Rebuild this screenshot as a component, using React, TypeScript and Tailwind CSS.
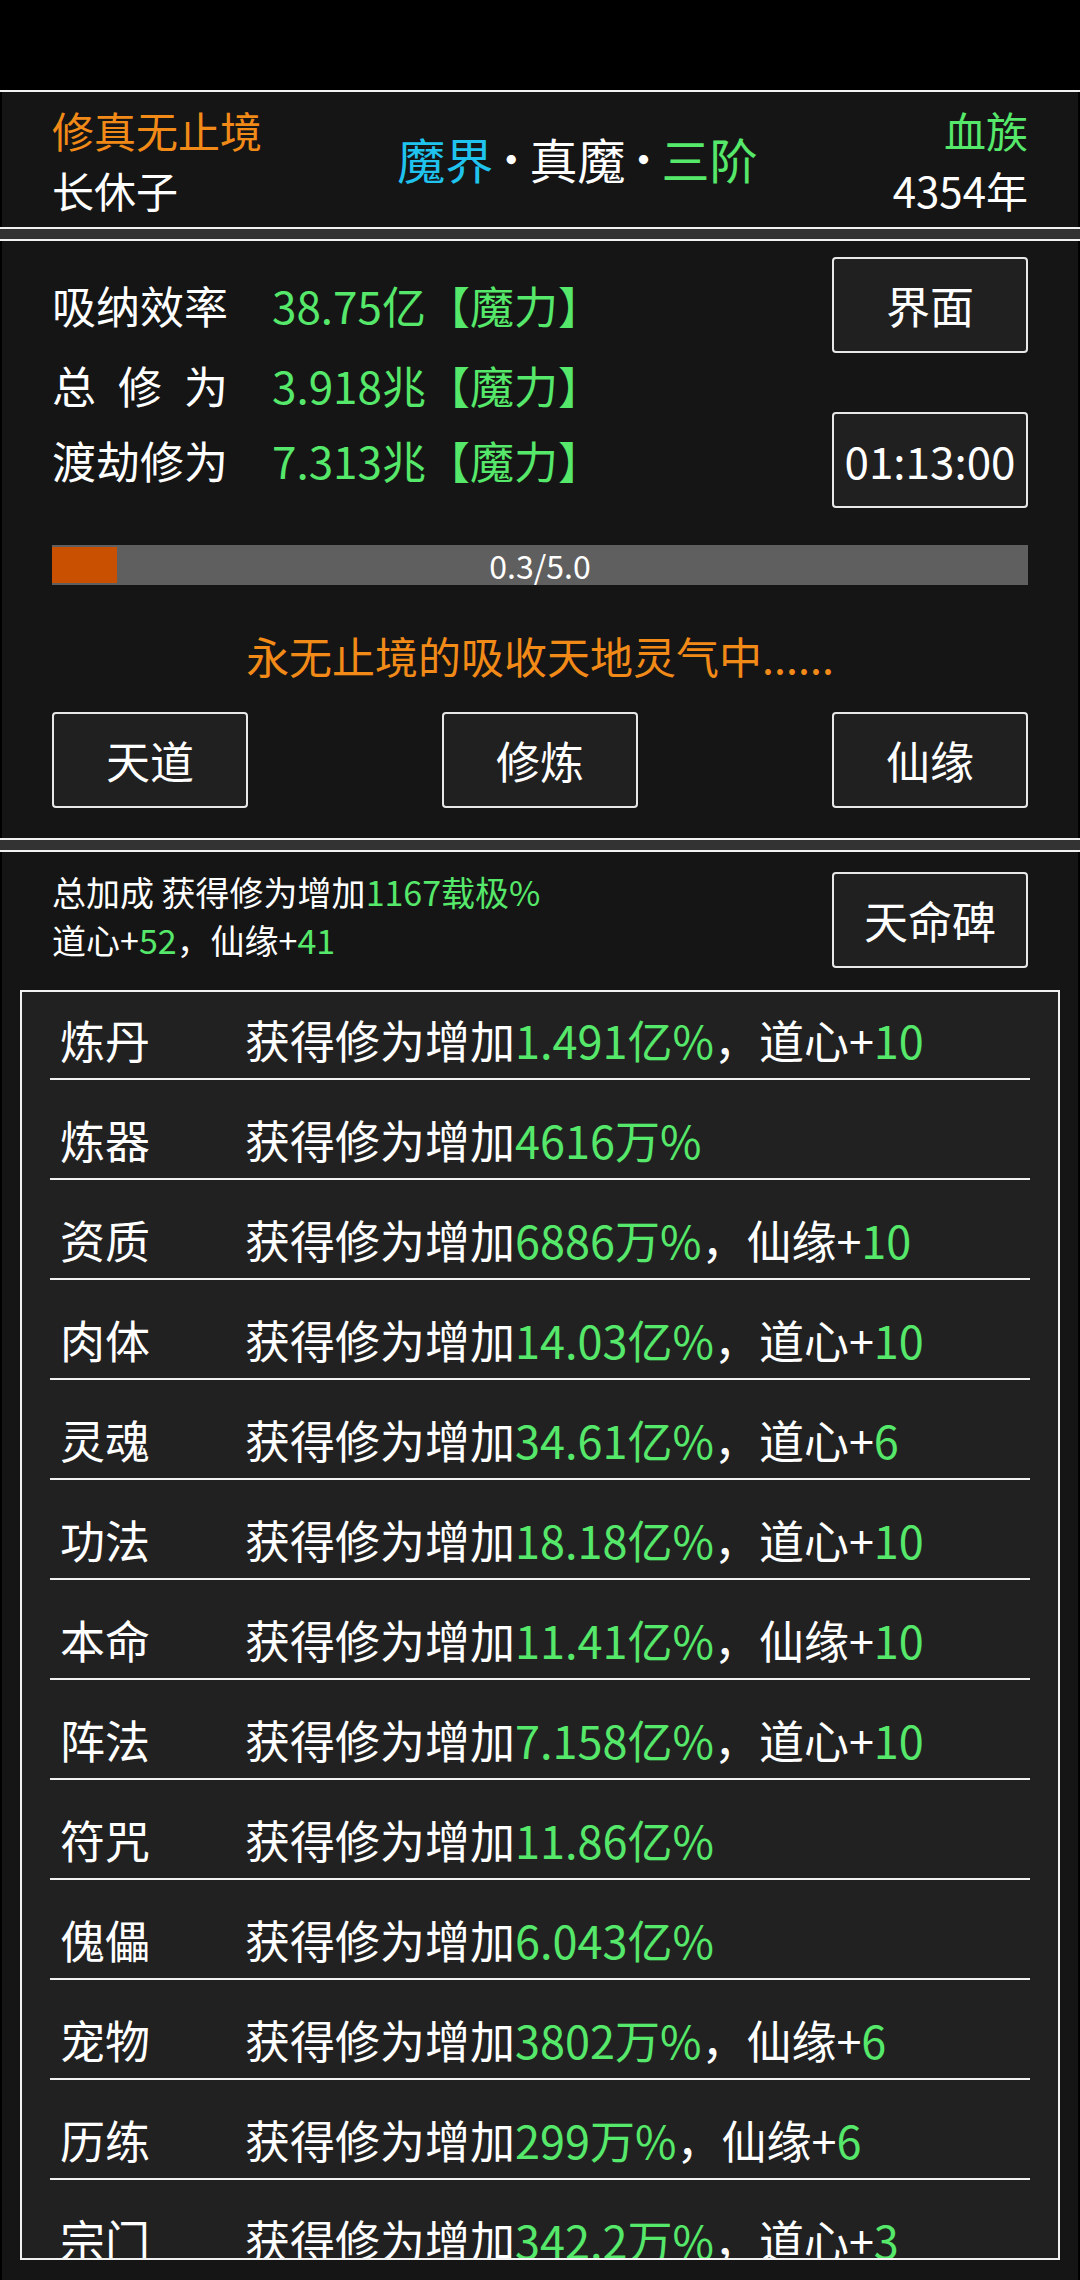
import React from "react";

const G = "text-[#56e86a]";

function Btn({ children }: { children: React.ReactNode }) {
  return (
    <div className="w-[196px] h-[96px] shrink-0 rounded-[4px] border-2 border-[#e8e8e8] bg-[#202020] flex items-center justify-center text-white text-[44px] leading-none">
      {children}
    </div>
  );
}

function Sep() {
  return (
    <div className="w-full">
      <div className="h-[2px] bg-[#f2f2f2]" />
      <div className="h-[10px] bg-[#333333]" />
      <div className="h-[2px] bg-[#f2f2f2]" />
    </div>
  );
}

const rows: { name: string; val: string; extra?: string; num?: string }[] = [
  { name: "炼丹", val: "1.491亿%", extra: "，道心+", num: "10" },
  { name: "炼器", val: "4616万%" },
  { name: "资质", val: "6886万%", extra: "，仙缘+", num: "10" },
  { name: "肉体", val: "14.03亿%", extra: "，道心+", num: "10" },
  { name: "灵魂", val: "34.61亿%", extra: "，道心+", num: "6" },
  { name: "功法", val: "18.18亿%", extra: "，道心+", num: "10" },
  { name: "本命", val: "11.41亿%", extra: "，仙缘+", num: "10" },
  { name: "阵法", val: "7.158亿%", extra: "，道心+", num: "10" },
  { name: "符咒", val: "11.86亿%" },
  { name: "傀儡", val: "6.043亿%" },
  { name: "宠物", val: "3802万%", extra: "，仙缘+", num: "6" },
  { name: "历练", val: "299万%", extra: "，仙缘+", num: "6" },
  { name: "宗门", val: "342.2万%", extra: "，道心+", num: "3" },
];

export default function App() {
  return (
    <div className="w-[1080px] h-[2280px] overflow-hidden bg-black text-white font-['Noto_Sans_CJK_SC',sans-serif]">
      {/* status bar */}
      <div className="h-[90px] bg-black" />
      <div className="h-[2px] bg-[#f2f2f2]" />

      {/* header panel */}
      <div className="mx-[2px] h-[135px] bg-[#151515] flex pt-[8px] px-[50px]">
        <div className="flex flex-col">
          <div className="h-[60px] flex items-center text-[42px] leading-none text-[#f28a18]">修真无止境</div>
          <div className="h-[60px] flex items-center text-[42px] leading-none">长休子</div>
        </div>
        <div className="flex-1 flex items-center justify-center pb-[12px] text-[48px] leading-none">
          <span className="text-[#1fc3ee]">魔界</span>
          <span className="text-[36px] font-bold">·</span>
          <span>真魔</span>
          <span className="text-[36px] font-bold">·</span>
          <span className={G}>三阶</span>
        </div>
        <div className="flex flex-col items-end">
          <div className={`h-[60px] flex items-center text-[42px] leading-none ${G}`}>血族</div>
          <div className="h-[60px] flex items-center text-[42px] leading-none">4354年</div>
        </div>
      </div>

      <Sep />

      {/* cultivation panel */}
      <div className="mx-[2px] h-[597px] bg-[#151515] px-[50px] pt-[16px] flex flex-col">
        <div className="flex justify-between h-[251px]">
          <div className="flex flex-col text-[44px] leading-none">
            <div className="h-[96px] flex items-center">
              <span className="w-[220px]">吸纳效率</span>
              <span className={G}>38.75亿【魔力】</span>
            </div>
            <div className="h-[64px] flex items-center">
              <span className="w-[220px]">
                <span className="w-[176px] flex justify-between">
                  <span>总</span>
                  <span>修</span>
                  <span>为</span>
                </span>
              </span>
              <span className={G}>3.918兆【魔力】</span>
            </div>
            <div className="h-[86px] flex items-center">
              <span className="w-[220px]">渡劫修为</span>
              <span className={G}>7.313兆【魔力】</span>
            </div>
          </div>
          <div className="flex flex-col gap-[59px]">
            <Btn>界面</Btn>
            <Btn>01:13:00</Btn>
          </div>
        </div>

        <div className="mt-[37px] h-[40px] bg-[#5f5f5f] relative flex items-center justify-center">
          <div className="absolute left-0 top-[2px] bottom-[2px] w-[65px] bg-[#c85000]" />
          <span className="relative text-[32px] leading-none">0.3/5.0</span>
        </div>

        <div className="mt-[40px] h-[60px] flex items-center justify-center text-[43px] leading-none text-[#f28a18]">
          永无止境的吸收天地灵气中......
        </div>

        <div className="mt-[27px] flex justify-between">
          <Btn>天道</Btn>
          <Btn>修炼</Btn>
          <Btn>仙缘</Btn>
        </div>
      </div>

      <Sep />

      {/* bonus panel */}
      <div className="mx-[2px] h-[1428px] bg-[#151515] pt-[20px] flex flex-col">
        <div className="px-[50px] flex justify-between h-[96px]">
          <div className="flex flex-col text-[34px] leading-none">
            <div className="h-[46px] flex items-center">
              总加成 获得修为增加<span className={G}>1167载极%</span>
            </div>
            <div className="h-[62px] flex items-center">
              道心+<span className={G}>52</span>，仙缘+<span className={G}>41</span>
            </div>
          </div>
          <Btn>天命碑</Btn>
        </div>

        <div className="mt-[22px] mx-[18px] h-[1270px] border-2 border-[#f2f2f2] bg-[#212121] overflow-hidden">
          <div className="-mt-[12px] px-[28px]">
            {rows.map((r) => (
              <div
                key={r.name}
                className="h-[100px] pt-[20px] border-b-2 border-[#f2f2f2] flex items-center text-[45px] leading-none"
              >
                <span className="w-[195px] pl-[10px]">{r.name}</span>
                <span>
                  获得修为增加<span className={G}>{r.val}</span>
                  {r.extra && (
                    <>
                      {r.extra}
                      <span className={G}>{r.num}</span>
                    </>
                  )}
                </span>
              </div>
            ))}
          </div>
        </div>
      </div>
    </div>
  );
}
